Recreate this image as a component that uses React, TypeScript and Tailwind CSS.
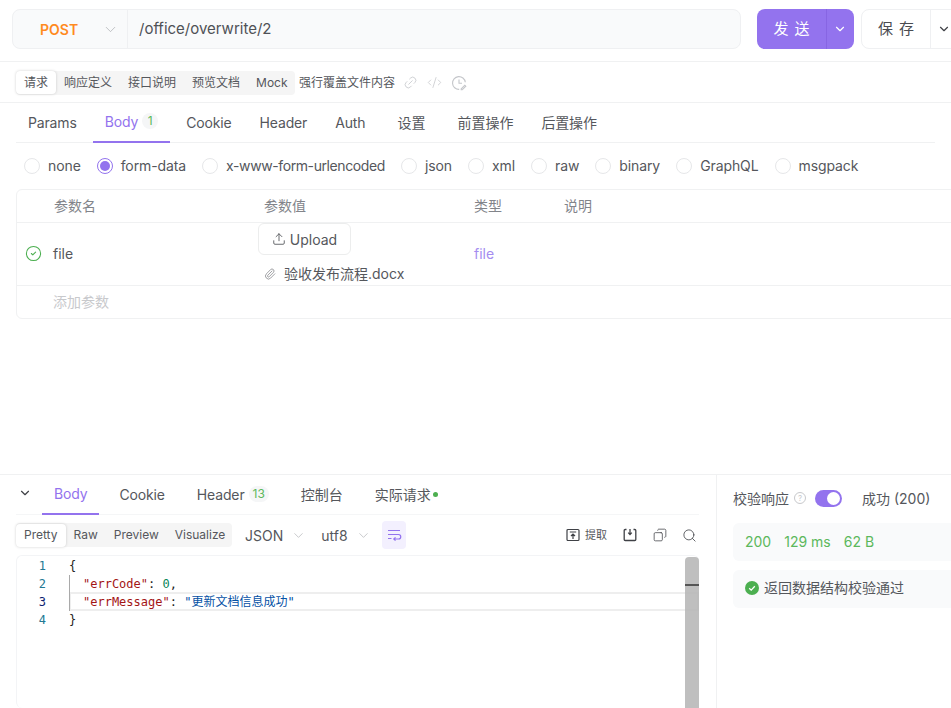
import React from "react";
import { ChevronDown, CircleCheck, CodeXml, Copy, Link2, Paperclip, Search, Upload } from "lucide-react";

const requestTabs = ["Params", "Body", "Cookie", "Header", "Auth", "设置", "前置操作", "后置操作"];
const bodyTypes = ["none", "form-data", "x-www-form-urlencoded", "json", "xml", "raw", "binary", "GraphQL", "msgpack"];

const Badge = ({ children }: { children: React.ReactNode }) => (
  <span className="flex h-4 min-w-4 items-center justify-center rounded-full bg-[#f5f6f7] px-1 text-[12px] leading-4 tracking-normal text-[#5cb85c]">
    {children}
  </span>
);

const ClockEditIcon = () => (
  <svg width="16" height="16" viewBox="0 0 16 16" fill="none" stroke="#c4c6ca" strokeWidth="1.1">
    <path d="M14.3 7.2A6.4 6.4 0 1 0 8.2 14.4" />
    <path d="M8 4.4v3.8h3" />
    <path d="M10.2 13.8l3.6-3.6 1 1-3.6 3.6h-1z" />
  </svg>
);

const ExtractIcon = () => (
  <svg width="14" height="14" viewBox="0 0 14 14" fill="none" stroke="#3f4146" strokeWidth="1.2">
    <rect x="1" y="1.5" width="12" height="11" rx="1" />
    <path d="M3.8 4h6.4M7 11V6M5 8l2-2 2 2" />
  </svg>
);

const SaveResponseIcon = () => (
  <svg width="14" height="14" viewBox="0 0 14 14" fill="none" stroke="#3f4146" strokeWidth="1.3">
    <path d="M3.5 1.5H2.2a1 1 0 0 0-1 1v9a1 1 0 0 0 1 1h9.6a1 1 0 0 0 1-1v-9a1 1 0 0 0-1-1h-1.3" />
    <path d="M7 1v5M5.2 4.6L7 6.6l1.8-2" />
  </svg>
);

const WrapIcon = () => (
  <svg width="16" height="14" viewBox="0 0 16 14" fill="none" stroke="#9373ee" strokeWidth="1.2">
    <path d="M2 2.5h12M2 6.5h10.5a2 2 0 0 1 0 4.5H8M2 10.5h3.5M9.5 9.4L7.8 11l1.7 1.6" />
  </svg>
);

const SuccessIcon = () => (
  <svg width="14" height="14" viewBox="0 0 14 14">
    <circle cx="7" cy="7" r="7" fill="#4caf50" />
    <path d="M4.2 7.2l2 1.9 3.6-3.8" fill="none" stroke="#fff" strokeWidth="1.3" />
  </svg>
);

const Segmented = ({ items, className }: { items: string[]; className: string }) => (
  <div className={`flex h-6 shrink-0 items-center whitespace-nowrap rounded bg-[#f5f5f5] ${className}`}>
    {items.map((item, i) => (
      <span
        key={item}
        className={
          i === 0
            ? "flex h-[23px] items-center rounded bg-white px-2 shadow-[0_0_3px_rgba(0,0,0,0.18)]"
            : "flex h-6 items-center px-2"
        }
      >
        {item}
      </span>
    ))}
  </div>
);

const codeLines = [1, 2, 3, 4];

export default function App() {
  return (
    <div className="flex h-[708px] w-[951px] flex-col overflow-hidden bg-white font-['Inter','Noto_Sans_CJK_SC',sans-serif] text-[#55575c]">
      {/* url bar */}
      <div className="flex h-[62px] shrink-0 items-start gap-4 border-b border-[#f0f1f2] px-3 pt-[9px]">
        <div className="flex h-10 w-[729px] shrink-0 items-center rounded-lg border border-[#eff0f2] bg-[#f9fafb]">
          <div className="flex h-full w-[115px] shrink-0 items-center border-r border-[#eff0f2] pl-[27px]">
            <span className="text-[14px] font-semibold text-[#ff8a1f]">POST</span>
            <ChevronDown size={17} strokeWidth={1} className="ml-[24px] text-[#a8aaae]" />
          </div>
          <span className="pl-[11px] text-[15px] text-[#4f5156]">/office/overwrite/2</span>
        </div>
        <div className="flex h-10 w-[97px] shrink-0 items-center rounded-lg bg-[#9373ee] text-white">
          <span className="flex h-full w-[70px] items-center justify-center border-r border-[#8765e3] pl-[6px] text-[15px] tracking-[6px]">
            发送
          </span>
          <ChevronDown size={14} strokeWidth={2} className="ml-[6px]" />
        </div>
        <div className="-ml-[9px] flex h-10 w-[110px] shrink-0 items-center rounded-lg border border-[#eff0f2]">
          <span className="flex h-full w-[69px] items-center justify-center border-r border-[#eff0f2] pl-[6px] text-[15px] tracking-[6px] text-[#4a4c51]">
            保存
          </span>
          <ChevronDown size={14} strokeWidth={2} className="ml-[6px] text-[#3f4146]" />
        </div>
      </div>

      {/* api tabs */}
      <div className="flex h-[41px] shrink-0 items-center border-b border-[#f0f1f2] pl-4 pt-[1px] text-[12px]">
        <Segmented items={["请求", "响应定义", "接口说明", "预览文档", "Mock"]} className="w-[279px]" />
        <span className="ml-1 whitespace-nowrap">强行覆盖文件内容</span>
        <Link2 size={15} strokeWidth={1.2} className="ml-[8px] -rotate-45 text-[#c4c6ca]" />
        <CodeXml size={15} strokeWidth={1.2} className="ml-[9px] text-[#c4c6ca]" />
        <span className="ml-[9px]"><ClockEditIcon /></span>
      </div>

      {/* request tabs */}
      <div className="mx-4 flex h-10 shrink-0 gap-1 border-b border-[#f0f1f2] text-[14px] tracking-[-0.15px]">
        {requestTabs.map((tab) => (
          <div
            key={tab}
            className={
              tab === "Body"
                ? "flex h-10 items-center gap-1 border-b-2 border-[#9373ee] px-3 pb-[2px] text-[#9373ee]"
                : tab === "设置" || tab === "前置操作"
                  ? "ml-1 flex h-10 items-center px-3 pb-[2px] tracking-normal"
                  : "flex h-10 items-center px-3 pb-[2px]"
            }
          >
            {tab}
            {tab === "Body" && <Badge>1</Badge>}
          </div>
        ))}
      </div>

      {/* body type */}
      <div className="flex h-[46px] shrink-0 items-center gap-4 pb-[1px] pl-6 text-[14px] tracking-[-0.1px]">
        {bodyTypes.map((type) => (
          <div key={type} className="flex items-center gap-2 whitespace-nowrap">
            {type === "form-data" ? (
              <span className="flex h-4 w-4 items-center justify-center rounded-full border border-[#9373ee]">
                <span className="h-2.5 w-2.5 rounded-full bg-[#9373ee]" />
              </span>
            ) : (
              <span className="h-4 w-4 rounded-full border border-[#e6e7e9]" />
            )}
            <span className={type === "x-www-form-urlencoded" ? "tracking-[-0.4px]" : ""}>{type}</span>
          </div>
        ))}
      </div>

      {/* params table */}
      <div className="ml-4 flex w-[1000px] shrink-0 flex-col rounded-md border border-[#f0f1f2] text-[14px]">
        <div className="flex h-[33px] items-center border-b border-[#f0f1f2] pb-[2px] pl-[37px] text-[#82848a]">
          <span className="w-[210px]">参数名</span>
          <span className="w-[210px]">参数值</span>
          <span className="w-[90px]">类型</span>
          <span>说明</span>
        </div>
        <div className="flex h-[63px] border-b border-[#f0f1f2]">
          <div className="flex w-[241px] items-center pb-[1px]">
            <CircleCheck size={17} strokeWidth={1.5} className="ml-2 text-[#4caf50]" />
            <span className="ml-[11px]">file</span>
          </div>
          <div className="w-[216px] pl-0">
            <div className="flex h-8 w-[93px] items-center justify-center gap-1 rounded-md border border-[#eceded]">
              <Upload size={14} strokeWidth={1.5} />
              Upload
            </div>
            <div className="mt-2 flex items-center pl-1.5">
              <Paperclip size={12} strokeWidth={1.3} className="text-[#6f7176]" />
              <span className="ml-[8px]">验收发布流程.docx</span>
            </div>
          </div>
          <div className="flex items-center pb-[1px] text-[#a58cf0]">file</div>
        </div>
        <div className="flex h-8 items-center pb-[2px] pl-[36px] text-[#c8c9cc]">添加参数</div>
      </div>

      <div className="flex-1" />

      {/* response */}
      <div className="flex h-[234px] shrink-0 border-t border-[#f0f1f2]">
        <div className="flex w-[717px] shrink-0 flex-col border-r border-[#f0f1f2] pl-4 pr-[17px]">
          <div className="flex h-[40px] shrink-0 gap-2 border-b border-[#f5f6f7] text-[14px] tracking-[-0.15px]">
            <ChevronDown size={14} strokeWidth={2} className="mt-[11px] w-[18px] shrink-0 text-[#3f4146]" />
            <span className="flex h-10 items-center border-b-2 border-[#9373ee] px-3 pb-[2px] text-[#9373ee]">Body</span>
            <span className="flex h-10 items-center px-3 pb-[2px]">Cookie</span>
            <span className="flex h-10 items-center gap-1 px-3 pb-[2px]">
              Header <Badge>13</Badge>
            </span>
            <span className="flex h-10 items-center px-3 pb-[2px] tracking-normal">控制台</span>
            <span className="flex h-10 items-center gap-[2px] px-3 pb-[2px] tracking-normal">
              实际请求
              <span className="h-[5px] w-[5px] rounded-full bg-[#4caf50]" />
            </span>
          </div>

          <div className="flex h-10 shrink-0 items-center text-[12px]">
            <Segmented items={["Pretty", "Raw", "Preview", "Visualize"]} className="w-[216px]" />
            <span className="ml-[13px] text-[14px]">JSON</span>
            <ChevronDown size={15} strokeWidth={1} className="ml-2 text-[#a8aaae]" />
            <span className="ml-[15px] text-[14px]">utf8</span>
            <ChevronDown size={15} strokeWidth={1} className="ml-2 text-[#a8aaae]" />
            <span className="ml-[11px] flex h-7 w-6 items-center justify-center rounded bg-[#f3f0fe]">
              <WrapIcon />
            </span>
            <span className="ml-auto flex items-center gap-[5px] text-[11px]">
              <ExtractIcon /> 提取
            </span>
            <span className="ml-4"><SaveResponseIcon /></span>
            <Copy size={14} strokeWidth={1.3} className="ml-4 -scale-x-100 text-[#3f4146]" />
            <Search size={15} strokeWidth={1.3} className="ml-[15px] mr-[2px] text-[#3f4146]" />
          </div>

          {/* editor */}
          <div className="relative flex flex-1 rounded-md border-l border-t border-[#f3f4f6] pt-[1px] font-['DejaVu_Sans_Mono','Noto_Sans_CJK_SC',monospace] text-[12px] leading-[18px]">
            <div className="w-[29px] text-right text-[#237893]">
              {codeLines.map((n) => (
                <div key={n} className={n === 3 ? "h-[18px] text-[#0b216f]" : "h-[18px]"}>
                  {n}
                </div>
              ))}
            </div>
            <div className="ml-[23px] flex-1 whitespace-pre text-[#222]">
              <div className="h-[18px]">{"{"}</div>
              <div className="relative z-10 h-[36px] border-l border-[#a9a9a9] pl-[13px]">
                <div className="h-[18px]">
                  <span className="text-[#a31515]">"errCode"</span>: <span className="text-[#098658]">0</span>,
                </div>
                <div className="h-[18px]">
                  <span className="text-[#a31515]">"errMessage"</span>: <span className="text-[#0451a5]">"更新文档信息成功"</span>
                </div>
              </div>
              <div className="h-[18px]">{"}"}</div>
            </div>
            {/* current line box */}
            <div className="absolute left-[52px] right-0 top-[36px] h-[19px] border-2 border-[#eeeeee]" />
            {/* scrollbar over the editor */}
            <div className="absolute right-0 top-[1px] h-full w-[14px] rounded-t-sm bg-[#b4b4b4]/85">
              <div className="mt-[27px] h-[2px] bg-[#555]" />
            </div>
          </div>
        </div>

        {/* validate */}
        <div className="flex-1 pl-4 text-[14px]">
          <div className="flex h-[48px] items-center pb-[2px]">
            <span>校验响应</span>
            <span className="ml-[5px] flex h-3 w-3 items-center justify-center rounded-full border border-[#c8c9cc] text-[8px] text-[#c8c9cc]">?</span>
            <span className="ml-[9px] flex h-[17px] w-[27px] items-center justify-end rounded-full bg-[#9373ee] pr-[2px]">
              <span className="h-[13px] w-[13px] rounded-full bg-white" />
            </span>
            <span className="ml-5 whitespace-nowrap">成功 (200)</span>
          </div>
          <div className="flex h-[38px] w-[240px] items-center gap-[13px] rounded-md bg-[#f9fafb] px-3 pb-[2px] text-[#5cb85c]">
            <span>200</span>
            <span>129 ms</span>
            <span>62 B</span>
          </div>
          <div className="mt-[9px] flex h-[38px] w-[240px] items-center gap-[5px] rounded-md bg-[#f9fafb] px-3 pb-[3px]">
            <SuccessIcon />
            <span className="whitespace-nowrap">返回数据结构校验通过</span>
          </div>
        </div>
      </div>
    </div>
  );
}
